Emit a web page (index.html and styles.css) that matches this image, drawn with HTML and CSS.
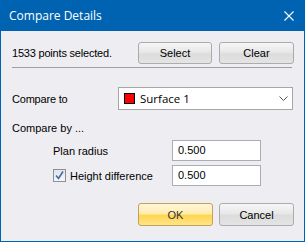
FILE: index.html
```html
<html lang="en">
<head>
  <meta charset="UTF-8" />
  <title>Compare Details</title>
  <link rel="stylesheet" href="styles.css">
</head>
<body>
<div class="window">
  <div class="titlebar">
    <span class="title">Compare Details</span>
    <svg class="close" width="10" height="10" viewBox="0 0 10 10">
      <path d="M0.5 0.5 L9.5 9.5 M9.5 0.5 L0.5 9.5" stroke="#fff" stroke-width="1.1" fill="none"/>
    </svg>
  </div>
  <div class="content">
    <div class="select_row">
      <span class="label">1533 points selected.</span>
      <button class="btn">Select</button>
      <button class="btn">Clear</button>
    </div>
    <div class="separator"></div>

    <div class="compare_row">
      <span class="label">Compare to</span>
      <div class="combo">
        <span class="swatch"></span>
        <span class="combo_text">Surface 1</span>
        <svg class="chevron" width="9" height="5" viewBox="0 0 9 5">
          <path d="M0.5 0.5 L4.5 4.5 L8.5 0.5" stroke="#555" stroke-width="1" fill="none"/>
        </svg>
      </div>
    </div>

    <div class="group_label">Compare by ...</div>
    <div class="option_row">
      <span class="option_label">Plan radius</span>
      <div class="field">0.500</div>
    </div>
    <div class="option_row">
      <span class="option_label">
        <span class="check">
          <svg width="9" height="9" viewBox="0 0 9 9">
            <path d="M1 4.5 L3.5 7.5 L8 0.5" stroke="#4a6a9c" stroke-width="1.6" fill="none"/>
          </svg>
        </span>
        Height difference
      </span>
      <div class="field">0.500</div>
    </div>

    <div class="footer">
      <button class="btn ok">OK</button>
      <button class="btn">Cancel</button>
    </div>
  </div>
</div>
</body>
</html>
```
FILE: styles.css
```css
*{box-sizing:border-box; margin:0; padding:0;}
body{width:305px; height:242px; font-family:"Liberation Sans", Arial, sans-serif; font-size:11px; color:#000;}
.window{width:305px; height:242px; border:1px solid #0063b1; border-top:none; background-color:#eeeef2; display:flex; flex-direction:column;}
.titlebar{height:31px; background-color:#0063b1; color:#fff; display:flex; align-items:center; justify-content:space-between; padding:0 10px 0 9px; margin:0 -1px;}
.title{font-family:"Open Sans", "Noto Sans", sans-serif; font-size:12px;}
.close{margin-right:1px;}
.content{padding:11px 10px 0 11px; display:flex; flex-direction:column;}

.select_row{display:grid; grid-template-columns:1fr 74px 75px; column-gap:7px; align-items:center; height:22px;}
.label{letter-spacing:-0.2px;}
.btn{height:22px; border:1px solid #acacac; border-radius:3px; font-family:"Liberation Sans", Arial, sans-serif; font-size:11px; color:#000;
     background:linear-gradient(#f6f6f6 0%, #e8e8e8 45%, #dcdcdc 55%, #e4e4e4 100%);}
.separator{height:1px; background-color:#a0a0a0; margin:3px 2px 0 0;}

.compare_row{display:flex; align-items:center; margin-top:19px;}
.compare_row .label{width:106px;}
.combo{width:175px; height:23px; background-color:#fff; border:1px solid #a6a6a6; display:flex; align-items:center; padding:0 4px 0 5px;}
.swatch{width:11px; height:11px; background-color:#f00; border:1px solid #000; margin-right:5px;}
.combo_text{flex:1; font-family:"Open Sans", "Noto Sans", sans-serif; font-size:11.5px;}

.group_label{margin-top:10px; height:17px; line-height:17px;}
.option_row{display:flex; align-items:center; height:21px; margin-top:3px;}
.option_row + .option_row{margin-top:4px;}
.option_label{width:160px; padding-left:41px; display:flex; align-items:center; white-space:nowrap;}
.check{width:13px; height:13px; border:1px solid #8e8f8f; background:linear-gradient(#dfe6ef, #f4f6f9); display:flex; align-items:center; justify-content:center; margin-right:4px;}
.field{width:89px; height:21px; background-color:#fff; border:1px solid #abadb3; padding:0 5px; line-height:19px; font-size:11px;}

.footer{display:grid; grid-template-columns:1fr 75px 75px; column-gap:6px; margin-top:17px;}
.footer .btn{height:23px;}
.btn.ok{grid-column:2; color:#333; border-color:#c2a258; background:linear-gradient(#fff6d8 0%, #ffedb0 45%, #ffd54f 55%, #ffe48a 100%);}
```
